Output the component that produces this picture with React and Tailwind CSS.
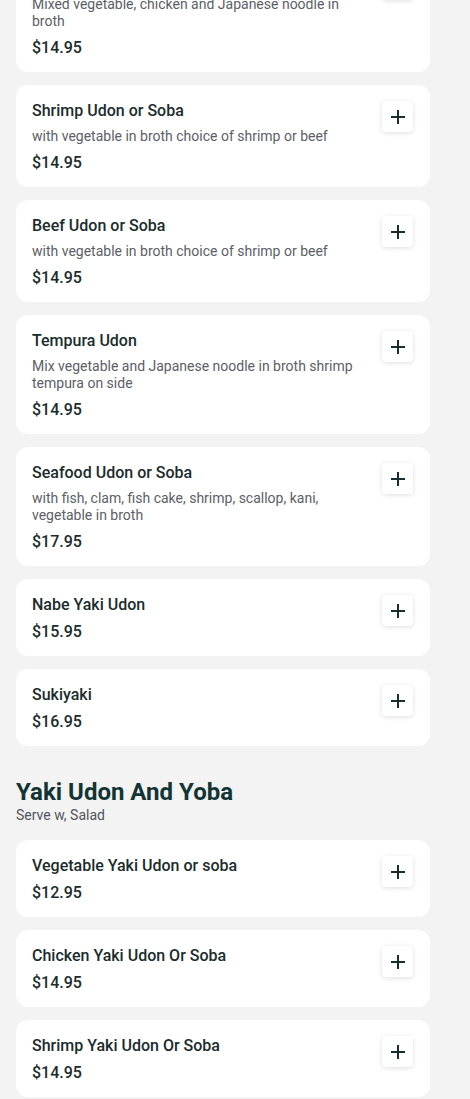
import React from "react";

const sections = [
    {
        title: null,
        items: [
            { name: "Chicken Udon or Soba", desc: "Mixed vegetable, chicken and Japanese noodle in broth", price: "$14.95" },
            { name: "Shrimp Udon or Soba", desc: "with vegetable in broth choice of shrimp or beef", price: "$14.95" },
            { name: "Beef Udon or Soba", desc: "with vegetable in broth choice of shrimp or beef", price: "$14.95" },
            { name: "Tempura Udon", desc: "Mix vegetable and Japanese noodle in broth shrimp tempura on side", price: "$14.95" },
            { name: "Seafood Udon or Soba", desc: "with fish, clam, fish cake, shrimp, scallop, kani, vegetable in broth", price: "$17.95" },
            { name: "Nabe Yaki Udon", price: "$15.95" },
            { name: "Sukiyaki", price: "$16.95" },
        ],
    },
    {
        title: "Yaki Udon And Yoba",
        subtitle: "Serve w, Salad",
        items: [
            { name: "Vegetable Yaki Udon or soba", price: "$12.95" },
            { name: "Chicken Yaki Udon Or Soba", price: "$14.95" },
            { name: "Shrimp Yaki Udon Or Soba", price: "$14.95" },
        ],
    },
];

const PlusButton = () => (
    <button className="w-[31px] h-[31px] shrink-0 bg-white rounded-[4px] shadow-[0_1px_5px_rgba(0,0,0,0.13)] flex items-center justify-center">
        <svg width="18" height="18" viewBox="0 0 24 24" fill="none" stroke="#162e2e" strokeWidth="2.7" strokeLinecap="square">
            <path d="M12 4v16M4 12h16" />
        </svg>
    </button>
);

const MenuCard = ({ item }) => (
    <div className="bg-white rounded-xl pl-4 pr-[17px] pt-[14px] pb-[12px] flex gap-4 items-start">
        <div className="flex-1 flex flex-col gap-[3px]">
            <div className="text-base leading-6 font-medium text-[#1a2c2c]">{item.name}</div>
            {item.desc && (
                <div className="text-sm leading-[17px] text-[#5b6066] pt-[1.5px] pb-[3.5px]">{item.desc}</div>
            )}
            <div className="text-base leading-6 font-medium text-[#1a2c2c]">{item.price}</div>
        </div>
        <div className="pt-[2px]">
            <PlusButton />
        </div>
    </div>
);

export default function App() {
    return (
        <div className="min-h-screen bg-[#f3f3f3] font-['Roboto',sans-serif] overflow-hidden">
            <div className="pl-4 pr-10 -mt-[47px]">
                {sections.map((section, si) => (
                    <div key={si} className={si > 0 ? "mt-[31px]" : ""}>
                        {section.title && (
                            <div className="mb-4">
                                <h2 className="text-2xl leading-[30px] font-bold text-[#133434]">{section.title}</h2>
                                <div className="text-sm leading-[17px] text-[#4f555b]">{section.subtitle}</div>
                            </div>
                        )}
                        <div className="flex flex-col gap-[13px]">
                            {section.items.map((item, i) => (
                                <MenuCard key={i} item={item} />
                            ))}
                        </div>
                    </div>
                ))}
            </div>
        </div>
    );
}
